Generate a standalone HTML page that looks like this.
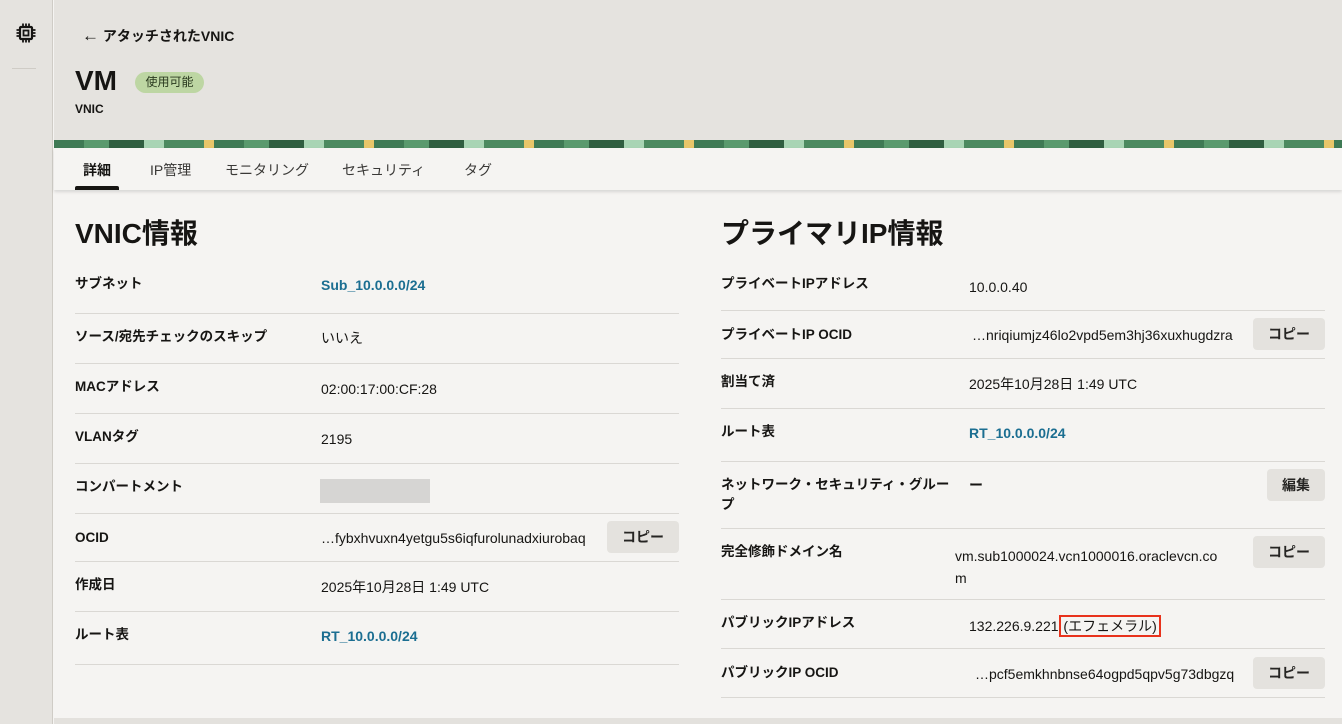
<!DOCTYPE html>
<html><head><meta charset="utf-8"><style>
*{margin:0;padding:0;box-sizing:border-box}
body{width:1342px;height:724px;overflow:hidden;background:#f5f4f2;font-family:"Liberation Sans","Noto Sans CJK JP",sans-serif;color:#161513;position:relative;font-size:14px}
.a{position:absolute;white-space:nowrap;line-height:1.3}
.side{left:0;top:0;width:53px;height:724px;background:#e5e3df;border-right:1px solid #cfccc6}
.hdr{left:54px;top:0;width:1288px;height:140px;background:#e5e3df}
.band{left:54px;top:140px;width:1288px;height:8px;background:repeating-linear-gradient(90deg,#3f7a55 0 30px,#5a9a6e 30px 55px,#2f5e40 55px 90px,#a8d4b4 90px 110px,#4c8a60 110px 150px,#e8c66a 150px 160px)}
.tabs{left:54px;top:148px;width:1288px;height:42px;background:#f5f4f2;box-shadow:0 2px 3px rgba(0,0,0,.12)}
.tab{top:161px;font-size:14px;color:#3a3937}
.lbl{font-weight:bold;font-size:13.5px}
.ln{height:1px;background:#dad8d4}
.lk{color:#1b6e91;font-weight:bold}
.btn{background:#e4e2de;border-radius:4px;height:32px;font-weight:bold;font-size:14px;text-align:center;line-height:32px;color:#262523}
h2{position:absolute;font-size:28px;font-weight:bold}
</style></head><body>
<div class="a side"></div>
<svg class="a" style="left:15px;top:22px" width="22" height="22" viewBox="0 0 22 22"><rect x="5" y="5" width="12" height="12" rx="1" fill="none" stroke="#161513" stroke-width="2.2"/><rect x="8.5" y="8.5" width="5" height="5" fill="none" stroke="#161513" stroke-width="1.8"/><path d="M8 1.5v3.5M11 1.5v3.5M14 1.5v3.5M8 17v3.5M11 17v3.5M14 17v3.5M1.5 8h3.5M1.5 11h3.5M1.5 14h3.5M17 8h3.5M17 11h3.5M17 14h3.5" stroke="#161513" stroke-width="1.8"/></svg>
<div class="a" style="left:12px;top:68px;width:24px;height:1px;background:#cfccc6"></div>
<div class="a hdr"></div>
<div class="a" style="left:82px;top:25px;font-size:14px;font-weight:bold"><span style="font-size:17px;font-weight:normal">←</span> アタッチされたVNIC</div>
<div class="a" style="left:75px;top:63px;font-size:28px;font-weight:bold">VM</div>
<div class="a" style="left:135px;top:72px;width:69px;height:21px;border-radius:11px;background:#bdd6a3;font-size:12px;line-height:21px;text-align:center;color:#2a3a1f">使用可能</div>
<div class="a" style="left:75px;top:102px;font-size:12px;font-weight:bold">VNIC</div>
<div class="a band"></div>
<div class="a tabs"></div>
<div class="a tab" style="left:83px;font-weight:bold;color:#161513">詳細</div>
<div class="a" style="left:75px;top:186px;width:44px;height:4px;background:#161513;border-radius:2px 2px 0 0"></div>
<div class="a tab" style="left:150px">IP管理</div>
<div class="a tab" style="left:225px">モニタリング</div>
<div class="a tab" style="left:342px">セキュリティ</div>
<div class="a tab" style="left:464px">タグ</div>

<h2 style="left:75px;top:212px">VNIC情報</h2>
<div class="a lbl" style="left:75px;top:275px">サブネット</div><div class="a lk" style="left:321px;top:276px">Sub_10.0.0.0/24</div>
<div class="a ln" style="left:75px;top:313px;width:604px"></div>
<div class="a lbl" style="left:75px;top:328px">ソース/宛先チェックのスキップ</div><div class="a" style="left:321px;top:329px">いいえ</div>
<div class="a ln" style="left:75px;top:363px;width:604px"></div>
<div class="a lbl" style="left:75px;top:378px">MACアドレス</div><div class="a" style="left:321px;top:380px">02:00:17:00:CF:28</div>
<div class="a ln" style="left:75px;top:413px;width:604px"></div>
<div class="a lbl" style="left:75px;top:428px">VLANタグ</div><div class="a" style="left:321px;top:430px">2195</div>
<div class="a ln" style="left:75px;top:463px;width:604px"></div>
<div class="a lbl" style="left:75px;top:478px">コンパートメント</div><div class="a" style="left:320px;top:479px;width:110px;height:24px;background:#d6d5d3"></div>
<div class="a ln" style="left:75px;top:513px;width:604px"></div>
<div class="a lbl" style="left:75px;top:529px">OCID</div><div class="a" style="left:321px;top:529px">…fybxhvuxn4yetgu5s6iqfurolunadxiurobaq</div><div class="a btn" style="left:607px;top:521px;width:72px">コピー</div>
<div class="a ln" style="left:75px;top:561px;width:604px"></div>
<div class="a lbl" style="left:75px;top:576px">作成日</div><div class="a" style="left:321px;top:578px">2025年10月28日 1:49 UTC</div>
<div class="a ln" style="left:75px;top:611px;width:604px"></div>
<div class="a lbl" style="left:75px;top:626px">ルート表</div><div class="a lk" style="left:321px;top:627px">RT_10.0.0.0/24</div>
<div class="a ln" style="left:75px;top:664px;width:604px"></div>

<h2 style="left:721px;top:212px">プライマリIP情報</h2>
<div class="a lbl" style="left:721px;top:275px">プライベートIPアドレス</div><div class="a" style="left:969px;top:278px">10.0.0.40</div>
<div class="a ln" style="left:721px;top:310px;width:604px"></div>
<div class="a lbl" style="left:721px;top:326px">プライベートIP OCID</div><div class="a" style="left:972px;top:326px">…nriqiumjz46lo2vpd5em3hj36xuxhugdzra</div><div class="a btn" style="left:1253px;top:318px;width:72px">コピー</div>
<div class="a ln" style="left:721px;top:358px;width:604px"></div>
<div class="a lbl" style="left:721px;top:373px">割当て済</div><div class="a" style="left:969px;top:375px">2025年10月28日 1:49 UTC</div>
<div class="a ln" style="left:721px;top:408px;width:604px"></div>
<div class="a lbl" style="left:721px;top:423px">ルート表</div><div class="a lk" style="left:969px;top:424px">RT_10.0.0.0/24</div>
<div class="a ln" style="left:721px;top:461px;width:604px"></div>
<div class="a lbl" style="left:721px;top:475px;line-height:20px;white-space:normal;width:238px">ネットワーク・セキュリティ・グループ</div><div class="a" style="left:969px;top:476px;font-weight:bold">ー</div><div class="a btn" style="left:1267px;top:469px;width:58px">編集</div>
<div class="a ln" style="left:721px;top:528px;width:604px"></div>
<div class="a lbl" style="left:721px;top:543px">完全修飾ドメイン名</div><div class="a" style="left:955px;top:545px;line-height:22px">vm.sub1000024.vcn1000016.oraclevcn.co<br>m</div><div class="a btn" style="left:1253px;top:536px;width:72px">コピー</div>
<div class="a ln" style="left:721px;top:599px;width:604px"></div>
<div class="a lbl" style="left:721px;top:614px">パブリックIPアドレス</div><div class="a" style="left:969px;top:617px">132.226.9.221 <span style="outline:2px solid #e8321c;outline-offset:1px;padding:0 1px">(エフェメラル)</span></div>
<div class="a ln" style="left:721px;top:648px;width:604px"></div>
<div class="a lbl" style="left:721px;top:664px">パブリックIP OCID</div><div class="a" style="left:975px;top:665px">…pcf5emkhnbnse64ogpd5qpv5g73dbgzq</div><div class="a btn" style="left:1253px;top:657px;width:72px">コピー</div>
<div class="a ln" style="left:721px;top:697px;width:604px"></div>
<div class="a" style="left:54px;top:718px;width:1288px;height:6px;background:#e3e1dd"></div>
</body></html>
